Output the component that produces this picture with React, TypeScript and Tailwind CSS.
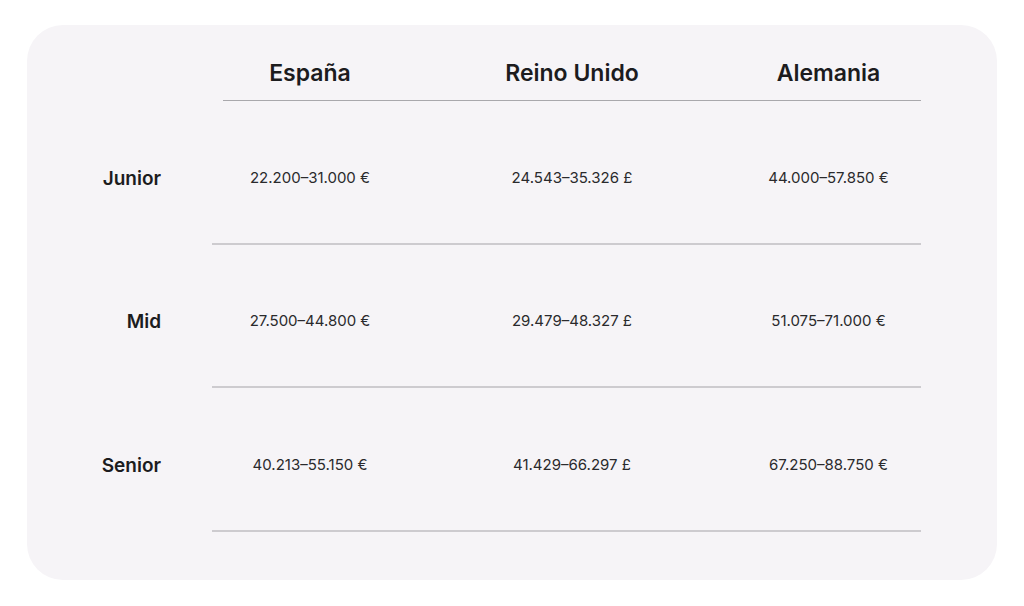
// Salary comparison card: junior / mid / senior ranges across three countries.

const countries = ["España", "Reino Unido", "Alemania"];

const rows = [
  { level: "Junior", values: ["22.200–31.000 €", "24.543–35.326 £", "44.000–57.850 €"] },
  { level: "Mid", values: ["27.500–44.800 €", "29.479–48.327 £", "51.075–71.000 €"] },
  { level: "Senior", values: ["40.213–55.150 €", "41.429–66.297 £", "67.250–88.750 €"] },
];

const cols = "grid grid-cols-[196px_328px_185px]";

export default function App() {
  return (
    <div
      className="h-[606px] w-[1024px] bg-white pl-[27px] pt-[25px]"
      style={{ fontFamily: "Inter, 'Noto Sans', sans-serif" }}
    >
      <div className="flex h-[555px] w-[970px] rounded-[36px] bg-[#f6f4f7]">
        {/* level labels */}
        <div className="flex w-[185px] flex-col pt-[76px]">
          {rows.map((r) => (
            <div
              key={r.level}
              className="flex h-[143.5px] items-center justify-end pr-[51px] pt-[12px] text-[19px] font-semibold text-[#1c1c1e]"
            >
              {r.level}
            </div>
          ))}
        </div>

        <div className="flex w-[709px] flex-col">
          <div className="ml-[11px] flex h-[76px] flex-col justify-end border-b border-[#a9a8ac]">
            <div className={`${cols} -ml-[11px] pb-[13px]`}>
              {countries.map((c) => (
                <div key={c} className="text-center text-[23px] font-semibold leading-7 text-[#1c1c1e]">
                  {c}
                </div>
              ))}
            </div>
          </div>

          {rows.map((r) => (
            <div
              key={r.level}
              className={`${cols} h-[143.5px] items-center border-b-2 border-[#cdcbcf] pt-[12px]`}
            >
              {r.values.map((v) => (
                <div key={v} className="text-center text-[15px] text-[#2a2a2c]">
                  {v}
                </div>
              ))}
            </div>
          ))}
        </div>
      </div>
    </div>
  );
}
